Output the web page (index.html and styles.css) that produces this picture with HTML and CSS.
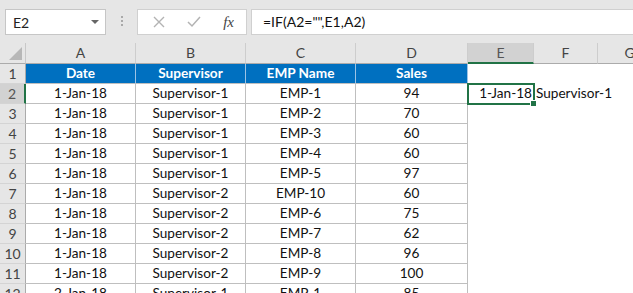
FILE: index.html
```html
<!DOCTYPE html>
<html lang="en">
<head>
    <meta charset="UTF-8">
    <title>Sheet</title>
    <link rel="stylesheet" href="styles.css">
</head>
<body>
    <div class="toolbar">
        <div class="namebox">
            <span>E2</span>
            <svg class="caret" width="8" height="5" viewBox="0 0 8 5"><path d="M0 0h8L4 4z" fill="#666"/></svg>
        </div>
        <div class="grip"><i></i><i></i><i></i></div>
        <div class="fxbox">
            <svg width="12" height="12" viewBox="0 0 12 12"><path d="M1 1l10 10M11 1L1 11" stroke="#b3b3b3" stroke-width="1.4"/></svg>
            <svg width="14" height="12" viewBox="0 0 14 12"><path d="M1 6l4 4 8-9" stroke="#b3b3b3" stroke-width="1.5" fill="none"/></svg>
            <span class="fx">fx</span>
        </div>
        <div class="formula">=IF(A2="",E1,A2)</div>
    </div>

    <div class="sheet">
        <div class="row head">
            <div class="corner"><svg width="13" height="13" viewBox="0 0 13 13"><path d="M13 0v13H0z" fill="#b7b7b7"/></svg></div>
            <div class="ch">A</div><div class="ch">B</div><div class="ch">C</div><div class="ch">D</div>
            <div class="ch sel">E</div><div class="ch">F</div><div class="ch">G</div>
        </div>
        <div class="row">
            <div class="rh">1</div>
            <div class="c th">Date</div><div class="c th">Supervisor</div><div class="c th">EMP Name</div><div class="c th">Sales</div>
            <div class="e"></div><div class="e"></div><div class="e"></div>
        </div>
        <div class="row">
            <div class="rh sel">2</div>
            <div class="c">1-Jan-18</div><div class="c">Supervisor-1</div><div class="c">EMP-1</div><div class="c">94</div>
            <div class="e active">1-Jan-18<span class="handle"></span></div><div class="e spill">Supervisor-1</div><div class="e"></div>
        </div>
        <div class="row">
            <div class="rh">3</div>
            <div class="c">1-Jan-18</div><div class="c">Supervisor-1</div><div class="c">EMP-2</div><div class="c">70</div>
            <div class="e"></div><div class="e"></div><div class="e"></div>
        </div>
        <div class="row">
            <div class="rh">4</div>
            <div class="c">1-Jan-18</div><div class="c">Supervisor-1</div><div class="c">EMP-3</div><div class="c">60</div>
            <div class="e"></div><div class="e"></div><div class="e"></div>
        </div>
        <div class="row">
            <div class="rh">5</div>
            <div class="c">1-Jan-18</div><div class="c">Supervisor-1</div><div class="c">EMP-4</div><div class="c">60</div>
            <div class="e"></div><div class="e"></div><div class="e"></div>
        </div>
        <div class="row">
            <div class="rh">6</div>
            <div class="c">1-Jan-18</div><div class="c">Supervisor-1</div><div class="c">EMP-5</div><div class="c">97</div>
            <div class="e"></div><div class="e"></div><div class="e"></div>
        </div>
        <div class="row">
            <div class="rh">7</div>
            <div class="c">1-Jan-18</div><div class="c">Supervisor-2</div><div class="c">EMP-10</div><div class="c">60</div>
            <div class="e"></div><div class="e"></div><div class="e"></div>
        </div>
        <div class="row">
            <div class="rh">8</div>
            <div class="c">1-Jan-18</div><div class="c">Supervisor-2</div><div class="c">EMP-6</div><div class="c">75</div>
            <div class="e"></div><div class="e"></div><div class="e"></div>
        </div>
        <div class="row">
            <div class="rh">9</div>
            <div class="c">1-Jan-18</div><div class="c">Supervisor-2</div><div class="c">EMP-7</div><div class="c">62</div>
            <div class="e"></div><div class="e"></div><div class="e"></div>
        </div>
        <div class="row">
            <div class="rh">10</div>
            <div class="c">1-Jan-18</div><div class="c">Supervisor-2</div><div class="c">EMP-8</div><div class="c">96</div>
            <div class="e"></div><div class="e"></div><div class="e"></div>
        </div>
        <div class="row">
            <div class="rh">11</div>
            <div class="c">1-Jan-18</div><div class="c">Supervisor-2</div><div class="c">EMP-9</div><div class="c">100</div>
            <div class="e"></div><div class="e"></div><div class="e"></div>
        </div>
        <div class="row">
            <div class="rh">12</div>
            <div class="c">2-Jan-18</div><div class="c">Supervisor-1</div><div class="c">EMP-1</div><div class="c">85</div>
            <div class="e"></div><div class="e"></div><div class="e"></div>
        </div>
    </div>
</body>
</html>
```

FILE: styles.css
```css
body { margin: 0; width: 633px; height: 293px; overflow: hidden; background: #fff; font-family: Lato, "Open Sans", sans-serif; font-size: 13.6px; color: #111; }

.toolbar { background: #e6e6e6; height: 43px; box-sizing: border-box; padding: 9px 0 0 5px; display: flex; align-items: flex-start; }
.namebox { width: 101px; height: 26px; box-sizing: border-box; background: #fff; border: 1px solid #c6c6c6; display: flex; align-items: center; justify-content: space-between; padding: 0 6px 0 7px; color: #222; font-size: 14px; }
.caret { margin-top: 1px; }
.grip { width: 31px; display: flex; flex-direction: column; align-items: center; gap: 2px; padding-top: 7px; }
.grip i { width: 2px; height: 2px; background: #a9a9a9; }
.fxbox { width: 110px; height: 26px; box-sizing: border-box; background: #fff; border: 1px solid #d0d0d0; display: flex; align-items: center; justify-content: space-between; padding: 0 12px 0 15px; }
.fx { font-family: "Liberation Serif", serif; font-style: italic; font-size: 15px; color: #444; }
.formula { flex: 1; height: 26px; margin-left: 4px; box-sizing: border-box; background: #fff; border: 1px solid #d0d0d0; border-right: none; padding-left: 11px; line-height: 24px; color: #111; font-size: 14px; }

.row { display: grid; grid-template-columns: 26px 110px 110px 110px 112px 66px 64px 64px; height: 20px; }
.row > div { box-sizing: border-box; text-align: center; line-height: 19px; white-space: nowrap; }

.head { height: 21px; background: #e6e6e6; }
.head > div { border-bottom: 1px solid #ababab; line-height: 20px; }
.corner { border-right: 1px solid #c8c8c8; display: flex; align-items: flex-end; justify-content: flex-end; padding: 0 3px 3px 0; }
.ch { border-right: 1px solid #cdcdcd; color: #444; font-size: 14px; }
.ch.sel { background: #d2d2d2; border-bottom: 2px solid #217346; line-height: 19px; color: #555; }

.rh { background: #e6e6e6; border-right: 1px solid #ababab; border-bottom: 1px solid #d4d4d4; color: #444; font-size: 14px; }
.rh.sel { background: #d2d2d2; border-right: 2px solid #217346; color: #555; }

.c { border-right: 1px solid #bfbfbf; border-bottom: 1px solid #bfbfbf; }
.th { background: #0070c0; color: #fff; font-weight: bold; border-right-color: #9cc3e5; border-bottom-color: #bfbfbf; }

.e { position: relative; }
.active { text-align: right !important; padding-right: 2px; }
.active::after { content: ""; position: absolute; left: -1px; top: -1px; right: -1px; bottom: -1px; border: 2px solid #217346; }
.handle { position: absolute; right: -3px; bottom: -3px; width: 5px; height: 5px; background: #217346; border: 1px solid #fff; z-index: 1; }
.spill { text-align: left !important; padding-left: 2px; overflow: visible; }
```
